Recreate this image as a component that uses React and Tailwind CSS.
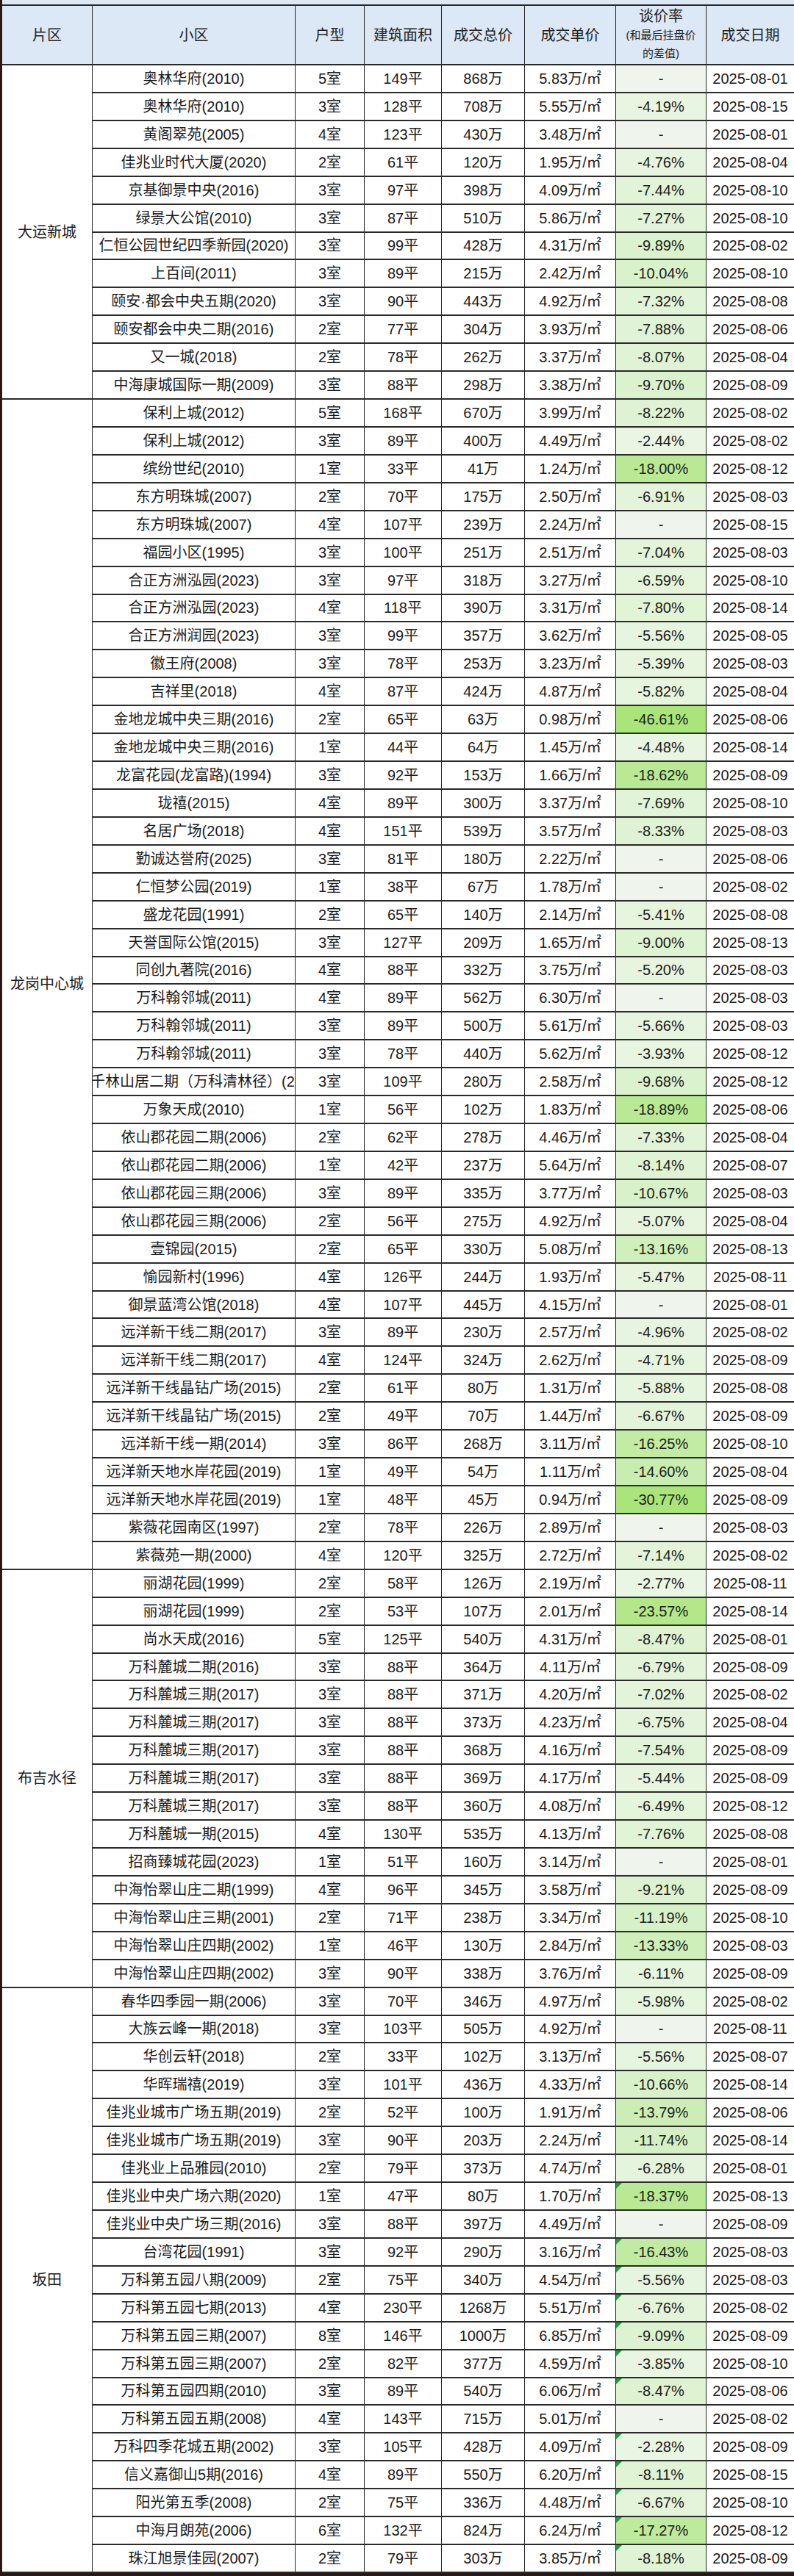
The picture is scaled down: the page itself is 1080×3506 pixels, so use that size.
// 深圳二手房成交明细表（2025年8月）
const SECTIONS = [
  {
    name: '大运新城',
    rows: [
      '奥林华府(2010)|5|149|868|5.83|-|01',
      '奥林华府(2010)|3|128|708|5.55|-4.19|15',
      '黄阁翠苑(2005)|4|123|430|3.48|-|01',
      '佳兆业时代大厦(2020)|2|61|120|1.95|-4.76|04',
      '京基御景中央(2016)|3|97|398|4.09|-7.44|10',
      '绿景大公馆(2010)|3|87|510|5.86|-7.27|10',
      '仁恒公园世纪四季新园(2020)|3|99|428|4.31|-9.89|02',
      '上百间(2011)|3|89|215|2.42|-10.04|10',
      '颐安·都会中央五期(2020)|3|90|443|4.92|-7.32|08',
      '颐安都会中央二期(2016)|2|77|304|3.93|-7.88|06',
      '又一城(2018)|2|78|262|3.37|-8.07|04',
      '中海康城国际一期(2009)|3|88|298|3.38|-9.70|09',
    ],
  },
  {
    name: '龙岗中心城',
    rows: [
      '保利上城(2012)|5|168|670|3.99|-8.22|02',
      '保利上城(2012)|3|89|400|4.49|-2.44|02',
      '缤纷世纪(2010)|1|33|41|1.24|-18.00|12',
      '东方明珠城(2007)|2|70|175|2.50|-6.91|03',
      '东方明珠城(2007)|4|107|239|2.24|-|15',
      '福园小区(1995)|3|100|251|2.51|-7.04|03',
      '合正方洲泓园(2023)|3|97|318|3.27|-6.59|10',
      '合正方洲泓园(2023)|4|118|390|3.31|-7.80|14',
      '合正方洲润园(2023)|3|99|357|3.62|-5.56|05',
      '徽王府(2008)|3|78|253|3.23|-5.39|03',
      '吉祥里(2018)|4|87|424|4.87|-5.82|04',
      '金地龙城中央三期(2016)|2|65|63|0.98|-46.61|06',
      '金地龙城中央三期(2016)|1|44|64|1.45|-4.48|14',
      '龙富花园(龙富路)(1994)|3|92|153|1.66|-18.62|09',
      '珑禧(2015)|4|89|300|3.37|-7.69|10',
      '名居广场(2018)|4|151|539|3.57|-8.33|03',
      '勤诚达誉府(2025)|3|81|180|2.22|-|06',
      '仁恒梦公园(2019)|1|38|67|1.78|-|02',
      '盛龙花园(1991)|2|65|140|2.14|-5.41|08',
      '天誉国际公馆(2015)|3|127|209|1.65|-9.00|13',
      '同创九著院(2016)|4|88|332|3.75|-5.20|03',
      '万科翰邻城(2011)|4|89|562|6.30|-|03',
      '万科翰邻城(2011)|3|89|500|5.61|-5.66|03',
      '万科翰邻城(2011)|3|78|440|5.62|-3.93|12',
      '千林山居二期（万科清林径）(2013)|3|109|280|2.58|-9.68|12',
      '万象天成(2010)|1|56|102|1.83|-18.89|06',
      '依山郡花园二期(2006)|2|62|278|4.46|-7.33|04',
      '依山郡花园二期(2006)|1|42|237|5.64|-8.14|07',
      '依山郡花园三期(2006)|3|89|335|3.77|-10.67|03',
      '依山郡花园三期(2006)|2|56|275|4.92|-5.07|04',
      '壹锦园(2015)|2|65|330|5.08|-13.16|13',
      '愉园新村(1996)|4|126|244|1.93|-5.47|11',
      '御景蓝湾公馆(2018)|4|107|445|4.15|-|01',
      '远洋新干线二期(2017)|3|89|230|2.57|-4.96|02',
      '远洋新干线二期(2017)|4|124|324|2.62|-4.71|09',
      '远洋新干线晶钻广场(2015)|2|61|80|1.31|-5.88|08',
      '远洋新干线晶钻广场(2015)|2|49|70|1.44|-6.67|09',
      '远洋新干线一期(2014)|3|86|268|3.11|-16.25|10',
      '远洋新天地水岸花园(2019)|1|49|54|1.11|-14.60|04',
      '远洋新天地水岸花园(2019)|1|48|45|0.94|-30.77|09',
      '紫薇花园南区(1997)|2|78|226|2.89|-|03',
      '紫薇苑一期(2000)|4|120|325|2.72|-7.14|02',
    ],
  },
  {
    name: '布吉水径',
    rows: [
      '丽湖花园(1999)|2|58|126|2.19|-2.77|11',
      '丽湖花园(1999)|2|53|107|2.01|-23.57|14',
      '尚水天成(2016)|5|125|540|4.31|-8.47|01',
      '万科麓城二期(2016)|3|88|364|4.11|-6.79|09',
      '万科麓城三期(2017)|3|88|371|4.20|-7.02|02',
      '万科麓城三期(2017)|3|88|373|4.23|-6.75|04',
      '万科麓城三期(2017)|3|88|368|4.16|-7.54|09',
      '万科麓城三期(2017)|3|88|369|4.17|-5.44|09',
      '万科麓城三期(2017)|3|88|360|4.08|-6.49|12',
      '万科麓城一期(2015)|4|130|535|4.13|-7.76|08',
      '招商臻城花园(2023)|1|51|160|3.14|-|01',
      '中海怡翠山庄二期(1999)|4|96|345|3.58|-9.21|09',
      '中海怡翠山庄三期(2001)|2|71|238|3.34|-11.19|10',
      '中海怡翠山庄四期(2002)|1|46|130|2.84|-13.33|03',
      '中海怡翠山庄四期(2002)|3|90|338|3.76|-6.11|09',
    ],
  },
  {
    name: '坂田',
    rows: [
      '春华四季园一期(2006)|3|70|346|4.97|-5.98|02',
      '大族云峰一期(2018)|3|103|505|4.92|-|11',
      '华创云轩(2018)|2|33|102|3.13|-5.56|07',
      '华晖瑞禧(2019)|3|101|436|4.33|-10.66|14',
      '佳兆业城市广场五期(2019)|2|52|100|1.91|-13.79|06',
      '佳兆业城市广场五期(2019)|3|90|203|2.24|-11.74|14',
      '佳兆业上品雅园(2010)|2|79|373|4.74|-6.28|01',
      '佳兆业中央广场六期(2020)|1|47|80|1.70|-18.37|13|t',
      '佳兆业中央广场三期(2016)|3|88|397|4.49|-|09',
      '台湾花园(1991)|3|92|290|3.16|-16.43|03|t',
      '万科第五园八期(2009)|2|75|340|4.54|-5.56|03|t',
      '万科第五园七期(2013)|4|230|1268|5.51|-6.76|02|t',
      '万科第五园三期(2007)|8|146|1000|6.85|-9.09|09|t',
      '万科第五园三期(2007)|2|82|377|4.59|-3.85|10|t',
      '万科第五园四期(2010)|3|89|540|6.06|-8.47|06|t',
      '万科第五园五期(2008)|4|143|715|5.01|-|02',
      '万科四季花城五期(2002)|3|105|428|4.09|-2.28|09|t',
      '信义嘉御山5期(2016)|4|89|550|6.20|-8.11|15|t',
      '阳光第五季(2008)|2|75|336|4.48|-6.67|10|t',
      '中海月朗苑(2006)|6|132|824|6.24|-17.27|12|t',
      '珠江旭景佳园(2007)|2|79|303|3.85|-8.18|09|t',
    ],
  },
]

// white -> green scale used on the 谈价率 column
const STOPS = [
  [0, [236, 246, 231]],
  [6, [230, 245, 222]],
  [12, [212, 240, 196]],
  [18, [186, 233, 150]],
  [30, [170, 229, 122]],
]

function rateBg(rate) {
  if (rate === '-') return 'rgb(239,245,236)'
  const v = Math.min(Math.abs(parseFloat(rate)), 30)
  for (let i = 1; i < STOPS.length; i++) {
    const [v1, c1] = STOPS[i]
    const [v0, c0] = STOPS[i - 1]
    if (v <= v1) {
      const t = (v - v0) / (v1 - v0)
      const c = c0.map((x, k) => Math.round(x + (c1[k] - x) * t))
      return `rgb(${c[0]},${c[1]},${c[2]})`
    }
  }
  return 'rgb(170,229,122)'
}

const cell =
  'flex shrink-0 items-center justify-center overflow-hidden whitespace-nowrap border-r border-[#262626]'

function DataRow({ line }) {
  const [name, room, area, total, price, rate, day, tri] = line.split('|')
  const long = name.includes('（')

  return (
    <div className="flex h-[37.93px] border-b-2 border-[#2a2a2a] text-[20px] leading-none text-[#1c1c1c]">
      <div className={`${cell} w-[276px] ${long ? '!justify-start' : ''}`}>
        <span className={long ? 'ml-[-3px]' : ''}>{name}</span>
      </div>
      <div className={`${cell} w-[94px]`}>{room}室</div>
      <div className={`${cell} w-[105px]`}>{area}平</div>
      <div className={`${cell} w-[113px]`}>{total}万</div>
      <div className={`${cell} w-[124px]`}>{price}万/㎡</div>
      <div className={`${cell} relative w-[123px]`} style={{ backgroundColor: rateBg(rate) }}>
        {tri && (
          <span className="absolute left-0 top-0 h-0 w-0 border-r-[8px] border-t-[8px] border-r-transparent border-t-[#1f9a3a]" />
        )}
        {rate === '-' ? '-' : `${rate}%`}
      </div>
      <div className="flex w-[119px] shrink-0 items-center justify-center whitespace-nowrap">
        2025-08-{day}
      </div>
    </div>
  )
}

function Section({ name, rows }) {
  return (
    <div className="flex">
      <div className="flex w-[123px] shrink-0 items-center justify-center border-b-2 border-r border-b-[#2a2a2a] border-r-[#262626] text-[20px] text-[#1c1c1c]">
        {name}
      </div>
      <div className="flex flex-col">
        {rows.map((line, i) => (
          <DataRow key={i} line={line} />
        ))}
      </div>
    </div>
  )
}

function Header() {
  const th = 'flex shrink-0 items-center justify-center border-r border-[#262626]'
  return (
    <div className="flex h-[83px] border-y-2 border-[#2a2a2a] bg-[#dce8f6] text-[20px] text-[#222]">
      <div className={`${th} w-[123px]`}>片区</div>
      <div className={`${th} w-[276px]`}>小区</div>
      <div className={`${th} w-[94px]`}>户型</div>
      <div className={`${th} w-[105px]`}>建筑面积</div>
      <div className={`${th} w-[113px]`}>成交总价</div>
      <div className={`${th} w-[124px]`}>成交单价</div>
      <div className={`${th} w-[123px] flex-col leading-[25px]`}>
        <span>谈价率</span>
        <span className="text-[15px]">(和最后挂盘价</span>
        <span className="text-[15px]">的差值)</span>
      </div>
      <div className="flex w-[119px] shrink-0 items-center justify-center">成交日期</div>
    </div>
  )
}

export default function App() {
  return (
    <div className="min-h-[3506px] w-[1080px] bg-[#2b1717] pl-[3px] font-['Liberation_Sans','Noto_Sans_CJK_SC',sans-serif]">
      <div className="bg-white">
        <div className="h-[6px] bg-[#dce8f6]" />
        <Header />
        {SECTIONS.map((s) => (
          <Section key={s.name} name={s.name} rows={s.rows} />
        ))}
      </div>
    </div>
  )
}
